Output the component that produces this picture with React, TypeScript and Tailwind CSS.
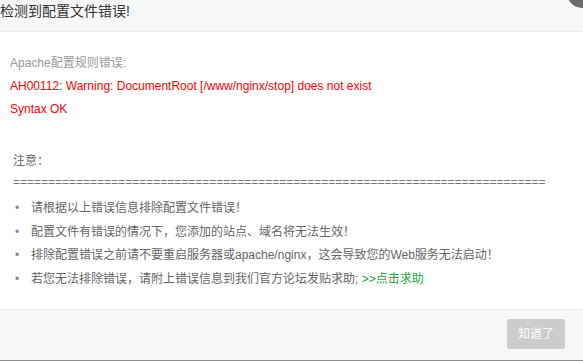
const TIPS = [
  "请根据以上错误信息排除配置文件错误！",
  "配置文件有错误的情况下，您添加的站点、域名将无法生效！",
  "排除配置错误之前请不要重启服务器或apache/nginx，这会导致您的Web服务无法启动！",
];

export default function App() {
  return (
    <div
      className="relative flex h-[361px] w-[583px] flex-col overflow-hidden bg-white text-[12px] text-[#666]"
      style={{ fontFamily: '"Liberation Sans", "Noto Sans CJK SC", sans-serif' }}
    >
      {/* header, the layer close button peeks in at the corner */}
      <div className="h-[32px] shrink-0 border-b border-[#eeeeee] bg-[#f6f8f8]">
        <h2 className="text-[14px] leading-[22px] text-[#333]">检测到配置文件错误!</h2>
      </div>
      <span className="absolute -right-[14px] -top-[22px] h-[30px] w-[30px] rounded-full bg-[#6b6b6b]" />

      <div className="flex-1 pl-[10px] pt-[20px]">
        <p className="leading-[23px] text-[#999]">Apache配置规则错误:</p>
        <p className="leading-[23px] text-[#f00]">AH00112: Warning: DocumentRoot [/www/nginx/stop] does not exist</p>
        <p className="leading-[23px] text-[#f00]">Syntax OK</p>

        <div className="mt-[29px] pl-[3px]">
          <p className="leading-[23px]">注意：</p>
          <p className="leading-[19px] text-[#777]">{"=".repeat(76)}</p>
          <ul className="mt-[5px]">
            {TIPS.map((t) => (
              <Tip key={t}>{t}</Tip>
            ))}
            <Tip>
              若您无法排除错误，请附上错误信息到我们官方论坛发贴求助;{" "}
              <a className="text-[#20a53a]">&gt;&gt;点击求助</a>
            </Tip>
          </ul>
        </div>
      </div>

      <div className="flex h-[51px] shrink-0 items-start justify-end border-t border-[#eeeeee] bg-[#f6f8f8] pr-[18px] pt-[9px]">
        <button className="h-[30px] w-[58px] rounded-[3px] bg-[#cccccc] text-[12px] text-white">知道了</button>
      </div>
      <div className="h-px shrink-0 bg-[#8c8c8c]" />
    </div>
  );
}

function Tip({ children }: { children: React.ReactNode }) {
  return (
    <li className="flex leading-[23.5px]">
      <span className="w-[18px] shrink-0 pl-[2px] text-[#888]">•</span>
      <span>{children}</span>
    </li>
  );
}
